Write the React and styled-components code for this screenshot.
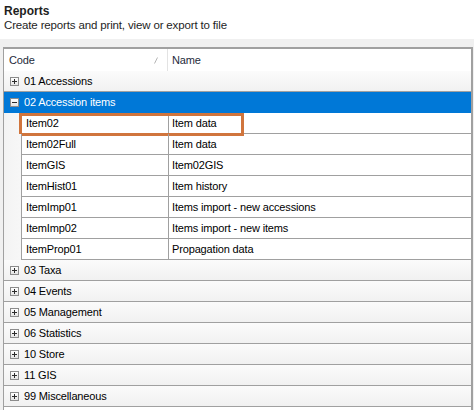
import React from "react";
import styled, { createGlobalStyle } from "styled-components";

const GlobalStyle = createGlobalStyle`
  html, body {
    margin: 0;
    padding: 0;
    background: #ffffff;
  }
  body {
    font-family: "Liberation Sans", Arial, sans-serif;
    overflow: hidden;
  }
`;

const Page = styled.div`
  width: 474px;
  height: 410px;
  display: flex;
  flex-direction: column;
  overflow: hidden;
`;

const Heading = styled.div`
  padding: 4px 4px 6px 4px;
  height: 29px;
  background: #ffffff;
`;

const Title = styled.div`
  font-size: 12px;
  font-weight: bold;
  line-height: 14px;
  color: #1e1e1e;
`;

const Subtitle = styled.div`
  font-size: 11.5px;
  letter-spacing: -0.15px;
  line-height: 15px;
  color: #1e1e1e;
`;

const Body = styled.div`
  flex: 1;
  background: #f0f0f0;
  padding: 8px 1px 0 3px;
  display: flex;
  min-height: 0;
`;

const Frame = styled.div`
  flex: 1;
  border-top: 2px solid #a0a0a0;
  border-left: 1px solid #a0a0a0;
  border-right: 2px solid #a0a0a0;
  background: #ffffff;
  font-size: 11px;
  letter-spacing: -0.15px;
  color: #000000;
  overflow: hidden;
`;

const HeaderRow = styled.div`
  display: grid;
  grid-template-columns: 164px 1fr;
  height: 22px;
  background: #ffffff;
`;

const HeaderCell = styled.div`
  display: flex;
  align-items: center;
  padding-left: ${(p) => p.$pad}px;
  position: relative;
  color: #1e2a3a;
  border-right: ${(p) => (p.$divider ? "1px solid #e3e3e3" : "none")};
`;

const SortMark = styled.svg`
  position: absolute;
  right: 9px;
  top: 8px;
`;

const GroupRow = styled.div`
  display: flex;
  align-items: center;
  height: 20px;
  border-bottom: 1px solid ${(p) => (p.$selected ? "#0078d7" : "#a0a0a0")};
  background: ${(p) =>
    p.$selected ? "#0078d7" : "linear-gradient(to bottom, #fbfbfb, #f1f1f1)"};
  color: ${(p) => (p.$selected ? "#ffffff" : "#000000")};
  padding-left: 6px;
  gap: 5px;
`;

const Toggle = styled.span`
  width: 7px;
  height: 7px;
  border: 1px solid #8c8c8c;
  background: linear-gradient(to bottom, #ffffff, #e4e4e4);
  position: relative;
  flex: none;

  &::before {
    content: "";
    position: absolute;
    left: 1px;
    right: 1px;
    top: 3px;
    height: 1px;
    background: #2b2b2b;
  }

  &::after {
    content: "";
    display: ${(p) => (p.$open ? "none" : "block")};
    position: absolute;
    top: 1px;
    bottom: 1px;
    left: 3px;
    width: 1px;
    background: #2b2b2b;
  }
`;

const ItemRow = styled.div`
  display: grid;
  grid-template-columns: 17px 147px 1fr;
  height: 21px;
  position: relative;
`;

const Indent = styled.div`
  background: linear-gradient(to right, #f3f3f3, #f7f7f7);
`;

const Cell = styled.div`
  display: flex;
  align-items: center;
  padding-left: ${(p) => p.$pad}px;
  border-bottom: 1px solid #a0a0a0;
  border-left: 1px solid #a0a0a0;
  white-space: nowrap;
`;

const Highlight = styled.div`
  position: absolute;
  left: 15px;
  top: 0;
  width: 219px;
  height: 17px;
  border: 3px solid #d0753d;
  pointer-events: none;
`;

const groupsBefore = ["01 Accessions"];
const groupsAfter = [
  "03 Taxa",
  "04 Events",
  "05 Management",
  "06 Statistics",
  "10 Store",
  "11 GIS",
  "99 Miscellaneous",
];

const items = [
  ["Item02", "Item data"],
  ["Item02Full", "Item data"],
  ["ItemGIS", "Item02GIS"],
  ["ItemHist01", "Item history"],
  ["ItemImp01", "Items import - new accessions"],
  ["ItemImp02", "Items import - new items"],
  ["ItemProp01", "Propagation data"],
];

const Group = ({ label, open, selected }) => (
  <GroupRow $selected={selected}>
    <Toggle $open={open} />
    <span>{label}</span>
  </GroupRow>
);

export default function App() {
  return (
    <Page>
      <GlobalStyle />
      <Heading>
        <Title>Reports</Title>
        <Subtitle>Create reports and print, view or export to file</Subtitle>
      </Heading>
      <Body>
        <Frame>
          <HeaderRow>
            <HeaderCell $pad={5} $divider>
              Code
              <SortMark width="4" height="7" viewBox="0 0 4 7">
                <line x1="3.5" y1="0.5" x2="0.5" y2="6.5" stroke="#b4b4b4" strokeWidth="1" />
              </SortMark>
            </HeaderCell>
            <HeaderCell $pad={4}>Name</HeaderCell>
          </HeaderRow>
          {groupsBefore.map((g) => (
            <Group key={g} label={g} />
          ))}
          <Group label="02 Accession items" open selected />
          {items.map(([code, name], i) => (
            <ItemRow key={code}>
              <Indent />
              <Cell $pad={4}>{code}</Cell>
              <Cell $pad={3}>{name}</Cell>
              {i === 0 && <Highlight />}
            </ItemRow>
          ))}
          {groupsAfter.map((g) => (
            <Group key={g} label={g} />
          ))}
        </Frame>
      </Body>
    </Page>
  );
}
